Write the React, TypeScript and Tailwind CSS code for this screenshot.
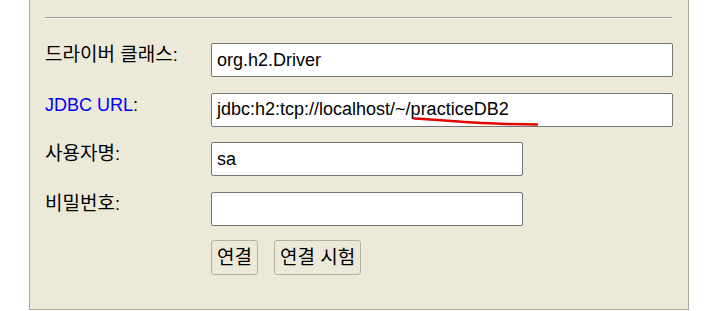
const latin = { fontFamily: '"Liberation Sans", "Noto Sans CJK KR", Arial, sans-serif' }

interface Field {
  label: string
  value: string
  wide: boolean
  link?: boolean
}

const fields: Field[] = [
  { label: "드라이버 클래스", value: "org.h2.Driver", wide: true },
  { label: "JDBC URL", value: "jdbc:h2:tcp://localhost/~/practiceDB2", wide: true, link: true },
  { label: "사용자명", value: "sa", wide: false },
  { label: "비밀번호", value: "", wide: false },
]

export default function App() {
  return (
    <div className="relative w-[712px] h-[311px] bg-white overflow-hidden text-black" style={latin}>
      <div className="ml-[29px] w-[660px] h-[310px] bg-[#ece9d8] border-x border-b border-[#aca899] pt-[17px] px-[15px]">
        <div className="h-[2px] border-t border-[#9c9c9c] border-b border-b-[#f6f4ec] mr-[1px]" />

        <div className="mt-[24px] flex flex-col gap-[15.5px]">
          {fields.map((f) => (
            <div key={f.label} className="flex items-start">
              <div className="w-[166px] pt-[1px] text-[18px] leading-[22px]">
                {f.link ? (
                  <span className="text-[#0000ff]">{f.label}</span>
                ) : (
                  <span className="text-[19px]">{f.label}</span>
                )}
                :
              </div>
              <div
                className={`h-[34px] ${f.wide ? "w-[462px]" : "w-[312px]"} bg-white border border-[#767676] rounded-[2px] px-[5px] flex items-center text-[18px] whitespace-nowrap`}
              >
                {f.value}
              </div>
            </div>
          ))}

          <div className="flex gap-[16px] pl-[166px] -mt-[1px]">
            <button className="h-[35px] px-[5px] border border-[#b4b1a4] rounded-[3px] text-[19px] leading-none bg-transparent">
              연결
            </button>
            <button className="h-[35px] px-[5px] border border-[#b4b1a4] rounded-[3px] text-[19px] leading-none bg-transparent">
              연결 시험
            </button>
          </div>
        </div>
      </div>

      <svg className="absolute left-0 top-0 pointer-events-none" width="712" height="311">
        <path
          d="M414 118.5 C 440 120, 480 123.5, 505 124 L 537 124.5"
          fill="none"
          stroke="#e30000"
          strokeWidth="2.5"
          strokeLinecap="round"
        />
      </svg>
    </div>
  )
}
